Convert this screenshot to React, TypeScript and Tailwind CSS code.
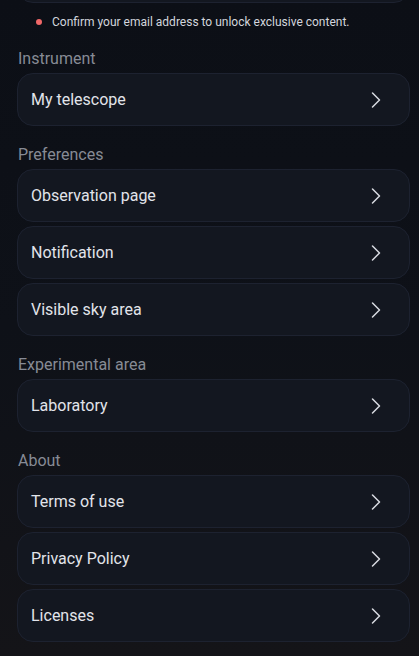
import { ChevronRight } from 'lucide-react';

const sections = [
  { title: 'Instrument', items: ['My telescope'] },
  { title: 'Preferences', items: ['Observation page', 'Notification', 'Visible sky area'] },
  { title: 'Experimental area', items: ['Laboratory'] },
  { title: 'About', items: ['Terms of use', 'Privacy Policy', 'Licenses'] },
];

function Row({ label }: { label: string }) {
  return (
    <button
      type="button"
      className="flex h-[53px] w-full items-center justify-between rounded-[16px] border border-[#1d2230] bg-[#131720] pl-[13px] pr-[19px] text-left"
    >
      <span className="text-[16px] text-[#e2e4ea]">{label}</span>
      <ChevronRight className="h-[28px] w-[28px] text-[#d6d8de]" strokeWidth={1.3} />
    </button>
  );
}

export default function App() {
  return (
    <div
      className="h-[656px] w-[419px] overflow-hidden bg-gradient-to-b from-[#0c0f16] via-[#0e1118] to-[#141418] pl-[17px] pr-[9px]"
      style={{ fontFamily: 'Roboto, "Noto Sans", sans-serif' }}
    >
      {/* Account card, mostly scrolled out of view */}
      <div className="-mt-[50px] h-[53px] rounded-[16px] border border-[#1d2230] bg-[#131720]" />

      {/* Email notice */}
      <div className="mt-[11px] flex items-center gap-[10px] pl-[19px]">
        <span className="h-[6px] w-[6px] rounded-full bg-[#f06868]" />
        <span className="text-[12px] leading-[16px] text-[#d3d6dd]">
          Confirm your email address to unlock exclusive content.
        </span>
      </div>

      {sections.map((section) => (
        <div key={section.title} className="mt-[17px]">
          <div className="pl-[1px] text-[16px] leading-[24px] text-[#878b95]">{section.title}</div>
          <div className="mt-[2px] flex flex-col gap-[4px]">
            {section.items.map((item) => (
              <Row key={item} label={item} />
            ))}
          </div>
        </div>
      ))}
    </div>
  );
}
